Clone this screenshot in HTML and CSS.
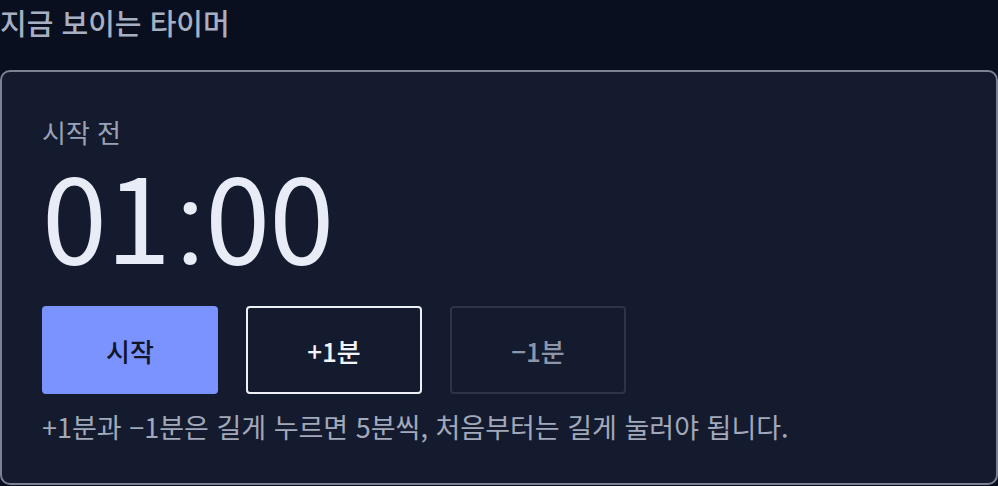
FILE: index.html
```html
<!DOCTYPE html>
<html lang="ko">
<head>
  <meta charset="UTF-8">
  <meta name="viewport" content="width=device-width, initial-scale=1.0">
  <title>지금 보이는 타이머</title>
  <link rel="stylesheet" href="styles.css">
</head>
<body>

  <h2 class="section-title">지금 보이는 타이머</h2>

  <div class="timer-card">
    <div class="timer-status">시작 전</div>
    <div class="timer-time">01<span class="timer-colon">:</span>00</div>
    <div class="timer-controls">
      <button class="btn btn-primary">시작</button>
      <button class="btn btn-outline">+1분</button>
      <button class="btn btn-outline" disabled>−1분</button>
    </div>
    <p class="timer-hint">+1분과 −1분은 길게 누르면 5분씩, 처음부터는 길게 눌러야 됩니다.</p>
  </div>

</body>
</html>
```

FILE: styles.css
```css
body {
  font-family: "Noto Sans CJK KR", "Noto Sans", sans-serif;
  margin: 0;
  padding: 0;
  background: #0a0f1f;
  color: #e6e9f2;
}
.section-title {
  margin: 0;
  height: 70px;
  font-size: 29px;
  font-weight: 500;
  color: #a7afc3;
  line-height: 44px;
}
.timer-card {
  box-sizing: border-box;
  width: 100%;
  height: 415px;
  border: 2px solid #7b8294;
  border-radius: 10px;
  background: #151b2e;
  padding: 43px 40px 0 40px;
}
.timer-status {
  font-size: 26px;
  color: #9aa2b6;
  line-height: 34px;
}
.timer-time {
  margin-top: 4px;
  height: 120px;
  font-size: 117px;
  font-weight: 400;
  line-height: 120px;
  letter-spacing: -1px;
  color: #e8ecf6;
}
.timer-colon {
  font-family: Roboto, sans-serif;
  margin: 0 2px 0 6px;
}
.timer-controls {
  display: flex;
  gap: 28px;
  margin-top: 33px;
}
.btn {
  width: 176px;
  height: 88px;
  font-family: inherit;
  font-size: 26px;
  font-weight: 500;
  border-radius: 4px;
  cursor: pointer;
}
.btn-primary {
  background: #7b93ff;
  border: none;
  color: #111525;
}
.btn-outline {
  background: #151b2e;
  border: 2px solid #eef0f6;
  color: #f2f4fa;
}
.btn-outline:disabled {
  border-color: #2d3446;
  color: #8d95a9;
  cursor: default;
}
.timer-hint {
  margin: 15px 0 0 0;
  font-size: 27px;
  color: #a1a9bb;
  line-height: 36px;
}
```
